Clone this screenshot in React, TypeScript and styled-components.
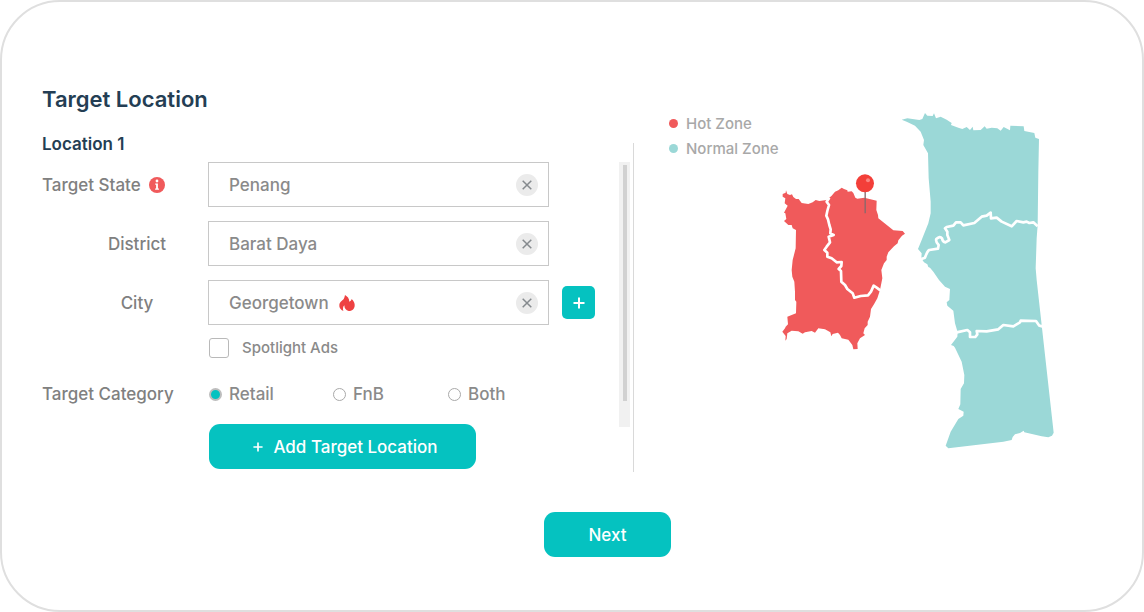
import React, { useState } from "react";
import styled, { createGlobalStyle } from "styled-components";

const GlobalStyle = createGlobalStyle`
  *, *::before, *::after { box-sizing: border-box; }
  body {
    margin: 0;
    background: #fff;
    font-family: Inter, "Liberation Sans", sans-serif;
    font-weight: 500;
    color: #808080;
  }
  button, input { font-family: inherit; font-weight: inherit; }
`;

const TEAL = "#05c2c0";
const NAVY = "#243e54";
const RED = "#f05a5b";
const AQUA = "#9bd8d7";

const Frame = styled.main`
  min-height: 100vh;
  border: 2px solid #dfdfdf;
  border-radius: 60px;
  padding: 81px 40px 52px;
`;

const Columns = styled.div`
  display: grid;
  grid-template-columns: 148fr 117fr;
`;

const Title = styled.h1`
  margin: 0 0 19px;
  font-size: 22px;
  line-height: 32px;
  font-weight: 600;
  color: ${NAVY};
`;

const Split = styled.div`
  display: flex;
`;

const Form = styled.form`
  flex: 1;
  min-width: 0;
  padding: 0 24px 3px 0;
`;

const ScrollTrack = styled.div`
  width: 11px;
  height: 265px;
  margin: 28px 3px 0 0;
  padding: 3px 3px 26px 4px;
  background: #f1f1f1;
`;

const ScrollThumb = styled.div`
  height: 100%;
  background: #d1d1d1;
`;

const Divider = styled.div`
  width: 1px;
  margin-top: 9px;
  background: #d9d9d9;
`;

const SubTitle = styled.h2`
  margin: 0 0 8px;
  font-size: 17px;
  line-height: 20px;
  font-weight: 600;
  color: ${NAVY};
`;

const FieldList = styled.div`
  display: grid;
  gap: 14px;
`;

const FieldRow = styled.div`
  display: grid;
  grid-template-columns: 166px minmax(0, 1fr) 33px;
  align-items: center;
`;

const LabelCell = styled.div<{ $nested?: boolean }>`
  display: flex;
  align-items: center;
  gap: 8px;
  justify-content: ${(p) => (p.$nested ? "center" : "flex-start")};
  width: ${(p) => (p.$nested ? "60px" : "auto")};
  margin-left: ${(p) => (p.$nested ? "65px" : "0")};
  font-size: 17px;
  line-height: 24px;
`;

const Field = styled.div`
  display: flex;
  align-items: center;
  gap: 10px;
  height: 45px;
  margin-right: 13px;
  padding: 0 10px 0 20px;
  border: 1px solid #c8c8c8;
`;

const TextInput = styled.input<{ $short?: boolean }>`
  flex: ${(p) => (p.$short ? "0 0 100px" : "1 1 0")};
  min-width: 0;
  width: 100px;
  padding: 0;
  border: 0;
  outline: 0;
  background: transparent;
  color: #8a8a8a;
  font-size: 17px;
  line-height: 24px;
`;

const ClearButton = styled.button`
  display: grid;
  place-items: center;
  flex: none;
  width: 22px;
  height: 22px;
  margin-left: auto;
  padding: 0;
  border: 0;
  border-radius: 50%;
  background: #ebebeb;
`;

const PlusButton = styled.button`
  display: grid;
  place-items: center;
  width: 33px;
  height: 33px;
  padding: 0;
  border: 0;
  border-radius: 5px;
  background: ${TEAL};
`;

const OptionRow = styled.div<{ $gap: number }>`
  display: grid;
  grid-template-columns: 167px minmax(0, 1fr);
  align-items: center;
  margin-top: ${(p) => p.$gap}px;
  font-size: 17px;
  line-height: 24px;
`;

const OptionBody = styled.div`
  grid-column: 2;
`;

const CheckLabel = styled.label`
  display: flex;
  align-items: center;
  gap: 13px;
  font-size: 15px;
  line-height: 20px;
  color: #8a8a8a;
`;

const CheckBox = styled.input`
  appearance: none;
  width: 20px;
  height: 20px;
  margin: 0;
  border: 1px solid #b9b9b9;
  border-radius: 3px;
  &:checked {
    background: ${TEAL};
  }
`;

const RadioGroup = styled.div`
  grid-column: 2;
  display: grid;
  grid-template-columns: 124px 115px auto;
`;

const RadioLabel = styled.label`
  display: flex;
  align-items: center;
  gap: 7px;
  color: #8a8a8a;
`;

const Radio = styled.input`
  appearance: none;
  width: 13px;
  height: 13px;
  margin: 0;
  border: 1px solid #a9a9a9;
  border-radius: 50%;
  &:checked {
    border: 2px solid #bdbdbd;
    background: ${TEAL};
  }
`;

const PrimaryButton = styled.button<{ $width: number }>`
  display: inline-flex;
  align-items: center;
  justify-content: center;
  gap: 10px;
  width: ${(p) => p.$width}px;
  height: 45px;
  padding: 0;
  border: 0;
  border-radius: 11px;
  background: ${TEAL};
  color: #fff;
  font-size: 17px;
  line-height: 24px;
`;

const AddButton = styled(PrimaryButton)`
  padding-left: 6px;
`;

const Footer = styled.footer`
  display: flex;
  justify-content: center;
  margin-top: 40px;
  padding-left: 71px;
`;

const MapPanel = styled.section`
  display: flex;
  justify-content: space-between;
  align-items: flex-start;
  padding: 25px 42px 0 35px;
`;

const Legend = styled.ul`
  flex: none;
  margin: 3px -3px 0 0;
  padding: 0;
  list-style: none;
`;

const LegendItem = styled.li<{ $color: string }>`
  display: flex;
  align-items: center;
  gap: 8px;
  font-size: 15px;
  line-height: 25px;
  color: #a8a8a8;
  &::before {
    content: "";
    width: 9px;
    height: 9px;
    border-radius: 50%;
    background: ${(p) => p.$color};
  }
`;

const MapDrawing = styled.svg`
  display: block;
  flex: 0 1 284px;
  min-width: 0;
`;

const InfoIcon = () => (
  <svg width="16" height="16" viewBox="0 0 16 16" role="img" aria-label="Info">
    <circle cx="8" cy="8" r="8" fill={RED} />
    <circle cx="8" cy="4" r="1.4" fill="#fff" />
    <path d="M6.2 6.5h2.7v4.900h1v1.300H6.100v-1.300h1V7.800h-.9z" fill="#fff" />
  </svg>
);

const FlameIcon = () => (
  <svg width="16" height="16" viewBox="0 0 48 48" aria-hidden="true">
    <path
      fill="#ee4142"
      d="M18 0C25 4 31 10 31 20C34 19 37 16 38 12C44 18 48 25 47 33C46 42 39 48 29 48C21 46 16 41 16 31C12 35 11 41 13 48C5 45 0 38 1 30C2 20 9 18 14 12C16 9 17 5 18 0Z"
    />
  </svg>
);

const CrossIcon = () => (
  <svg width="10" height="10" viewBox="0 0 10 10" aria-hidden="true">
    <path d="M.7.7l8.600 8.600M9.300.7L.7 9.300" stroke="#858a8e" strokeWidth="1.5" />
  </svg>
);

const PlusIcon = ({ size }: { size: number }) => (
  <svg width={size} height={size} viewBox="0 0 12 12" aria-hidden="true">
    <path d="M6 .5v11M.5 6h11" stroke="#fff" strokeWidth="2" />
  </svg>
);

const ZoneMap = () => (
  <MapDrawing viewBox="0 0 284 344" role="img" aria-label="Map of hot and normal zones">
    <g transform="translate(-6 57) scale(.33333)" strokeLinejoin="round">
      <path
        fill={RED}
        d="M38 87L47 83 48 76 52 87 60 90 66 88 70 96 78 102 86 102 95 114 115 117 128 112 137 105 148 108 170 105 178 98 185 92 195 80 205 76 215 68 222 72 232 76 233 80 245 79 250 84 256 98 262 101 283 98 320 107 319 135 324 150 325 160 340 172 370 196 398 198 405 206 396 212 385 226 383 235 372 244 355 262 350 275 350 285 342 295 334 315 337 340 330 375 322 400 312 418 303 432 300 455 293 470 293 480 284 490 280 505 285 510 270 520 262 535 263 552 250 553 247 540 235 524 215 520 210 510 204 503 188 507 184 514 181 502 165 493 145 490 135 503 125 498 105 502 98 506 85 499 65 497 52 505 50 522 46 527 47 513 37 500 45 490 47 485 54 478 52 455 78 445 79 410 75 405 75 380 73 350 67 335 65 315 68 285 77 250 78 195 68 190 65 180 55 180 42 168 49 162 46 145 42 143 53 122 44 115 46 100 38 95Z"
      />
      <path
        fill="none"
        stroke="#fff"
        strokeWidth="8"
        d="M178 98L170 110 177 120 172 138 169 152 174 163 178 180 182 193 181 205 191 210 176 215 180 232 170 245 163 255 172 263 172 275 185 280 200 292 215 291 214 303 206 312 213 318 214 350 225 360 232 372 248 385 253 398 272 393 294 391 303 380 311 362 320 368 331 376"
      />
      <path d="M285.500 78V145" stroke="#85696c" strokeWidth="4" />
      <circle cx="285" cy="55" r="27" fill="#f33f39" />
      <circle cx="294" cy="46" r="6" fill="#fa8580" />
    </g>
    <g transform="translate(114 -3) scale(.33333)" strokeLinejoin="round">
      <path
        fill={AQUA}
        d="M35 44L52 40 88 45 97 42 105 24 112 32 128 33 132 25 138 40 152 35 170 44 185 54 183 60 205 68 217 72 230 66 240 75 248 65 250 76 272 75 284 64 290 71 305 68 322 70 332 77 341 66 360 76 361 62 401 64 403 78 433 84 436 98 447 102 445 200 443 360 440 400 437 490 440 525 455 660 491 983 486 992 475 997 455 994 403 982 401 977 390 984 375 988 368 996 365 1005 340 1010 175 1030 167 1022 182 980 205 942 220 932 221 920 205 912 211 898 212 852 222 835 223 810 215 770 195 728 191 723 183 720 202 695 203 682 195 655 190 617 172 602 170 592 178 585 180 552 165 545 147 525 130 500 120 488 115 486 112 478 102 472 94 460 95 445 84 432 95 405 115 355 122 325 122 290 116 220 114 145 100 120 102 105 92 80 75 62 50 50Z"
      />
      <g fill="none" stroke="#fff" strokeWidth="8">
        <path d="M94 462L105 458Q112 438 118 435L144 431 146 420Q136 410 139 402Q150 392 156 400Q158 412 166 412L178 405 172 390 172 380 165 370 170 366 190 362 198 352 212 352 220 361 253 354 275 335 290 332 302 323 303 340 320 338 335 350 365 364 380 348 400 352 410 350 418 354 430 352 443 364" />
        <path d="M200 682L232 675 240 682 240 696 256 696 262 688 260 678 290 679 325 673 340 660 370 664 390 652 392 647 438 648 448 662 457 664" />
      </g>
    </g>
  </MapDrawing>
);

interface LocationFieldProps {
  id: string;
  label: string;
  initial: string;
  nested?: boolean;
  info?: boolean;
  hot?: boolean;
  addable?: boolean;
}

const LocationField = ({ id, label, initial, nested, info, hot, addable }: LocationFieldProps) => {
  const [value, setValue] = useState(initial);
  return (
    <FieldRow>
      <LabelCell $nested={nested}>
        <label htmlFor={id}>{label}</label>
        {info && <InfoIcon />}
      </LabelCell>
      <Field>
        <TextInput id={id} $short={hot} value={value} onChange={(e) => setValue(e.target.value)} />
        {hot && <FlameIcon />}
        <ClearButton type="button" aria-label={`Clear ${label}`} onClick={() => setValue("")}>
          <CrossIcon />
        </ClearButton>
      </Field>
      {addable && (
        <PlusButton type="button" aria-label={`Add ${label}`}>
          <PlusIcon size={12} />
        </PlusButton>
      )}
    </FieldRow>
  );
};

const CATEGORIES = ["Retail", "FnB", "Both"];

export default function App() {
  return (
    <>
      <GlobalStyle />
      <Frame>
        <Columns>
          <section>
            <Title>Target Location</Title>
            <Split>
              <Form>
                <SubTitle>Location 1</SubTitle>
                <FieldList>
                  <LocationField id="state" label="Target State" initial="Penang" info />
                  <LocationField id="district" label="District" initial="Barat Daya" nested />
                  <LocationField id="city" label="City" initial="Georgetown" nested hot addable />
                </FieldList>
                <OptionRow $gap={13}>
                  <OptionBody>
                    <CheckLabel>
                      <CheckBox type="checkbox" />
                      Spotlight Ads
                    </CheckLabel>
                  </OptionBody>
                </OptionRow>
                <OptionRow $gap={24} role="radiogroup" aria-labelledby="category">
                  <span id="category">Target Category</span>
                  <RadioGroup>
                    {CATEGORIES.map((name) => (
                      <RadioLabel key={name}>
                        <Radio type="radio" name="category" defaultChecked={name === "Retail"} />
                        {name}
                      </RadioLabel>
                    ))}
                  </RadioGroup>
                </OptionRow>
                <OptionRow $gap={18}>
                  <OptionBody>
                    <AddButton type="button" $width={267}>
                      <PlusIcon size={10} />
                      Add Target Location
                    </AddButton>
                  </OptionBody>
                </OptionRow>
              </Form>
              <ScrollTrack aria-hidden="true">
                <ScrollThumb />
              </ScrollTrack>
              <Divider />
            </Split>
          </section>
          <MapPanel>
            <Legend>
              <LegendItem $color={RED}>Hot Zone</LegendItem>
              <LegendItem $color={AQUA}>Normal Zone</LegendItem>
            </Legend>
            <ZoneMap />
          </MapPanel>
        </Columns>
        <Footer>
          <PrimaryButton type="button" $width={127}>
            Next
          </PrimaryButton>
        </Footer>
      </Frame>
    </>
  );
}
